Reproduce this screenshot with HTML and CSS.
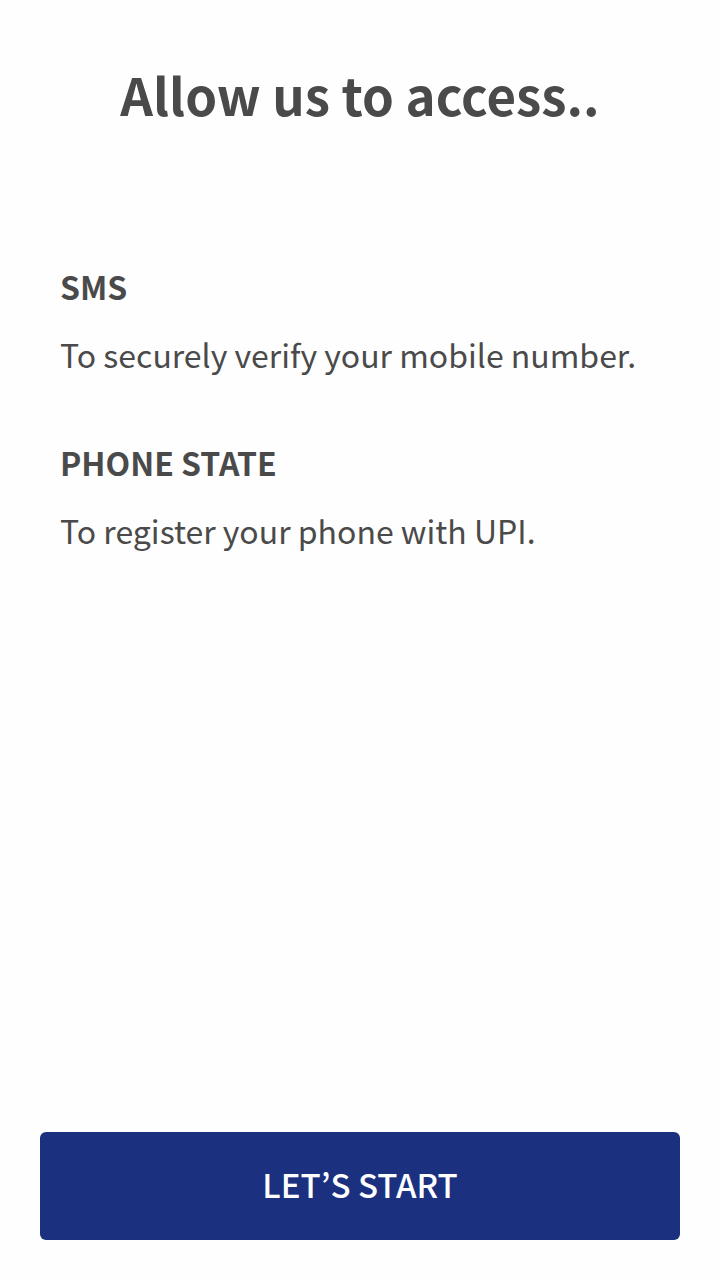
FILE: index.html
```html
<!DOCTYPE html>
<html lang="en">
<head>
<meta charset="utf-8">
<meta name="viewport" content="width=device-width, initial-scale=1">
<title>Permissions</title>
<link rel="stylesheet" href="styles.css">
</head>
<body>
<main class="screen">
  <h1 class="title">Allow us to access..</h1>
  <div class="permissions">
    <section class="permission">
      <h2 class="permission-name">SMS</h2>
      <p class="permission-reason">To securely verify your mobile number.</p>
    </section>
    <section class="permission">
      <h2 class="permission-name">PHONE STATE</h2>
      <p class="permission-reason">To register your phone with UPI.</p>
    </section>
  </div>
  <button class="start" type="button">LET’S START</button>
</main>
</body>
</html>
```

FILE: styles.css
```css
* {
  box-sizing: border-box;
}

body {
  margin: 0;
  background: #fefefe;
  color: #4a4a4a;
  font-family: "Noto Sans CJK KR", "Noto Sans", sans-serif;
}

.screen {
  display: flex;
  flex-direction: column;
  min-height: 100vh;
  padding: 62px 40px 40px;
}

.title {
  margin: 0;
  font-size: 51px;
  font-weight: 700;
  line-height: 64px;
  text-align: center;
}

.permissions {
  display: flex;
  flex: 1;
  flex-direction: column;
  gap: 60px;
  padding: 136px 20px 40px;
}

.permission {
  display: flex;
  flex-direction: column;
  gap: 20px;
}

.permission-name,
.permission-reason {
  margin: 0;
  font-size: 32px;
  line-height: 48px;
}

.permission-name {
  font-weight: 700;
}

.permission-reason {
  font-weight: 400;
}

.start {
  width: 100%;
  min-height: 108px;
  padding: 0 20px 4px;
  border: 0;
  border-radius: 6px;
  background: #1b317f;
  color: #fff;
  font-family: inherit;
  font-size: 33px;
  font-weight: 500;
}
```
